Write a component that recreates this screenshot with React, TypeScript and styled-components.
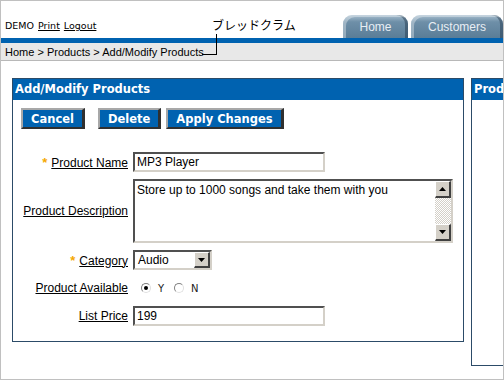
import styled, { createGlobalStyle } from "styled-components";

const GlobalStyle = createGlobalStyle`
  html, body {
    margin: 0;
    padding: 0;
    background: #ffffff;
  }
  body {
    font-family: "Liberation Sans", Arial, sans-serif;
    font-size: 12px;
    color: #000;
  }
`;

const Frame = styled.div`
  position: relative;
  width: 504px;
  height: 380px;
  box-sizing: border-box;
  border: 1px solid #c0c0c0;
  overflow: hidden;
  background: #fff;
`;

const TopBar = styled.div`
  display: flex;
  justify-content: space-between;
  align-items: flex-end;
  height: 37px;
  padding-left: 4px;
`;

const UserLinks = styled.div`
  font-family: "DejaVu Sans", Verdana, sans-serif;
  font-size: 9.5px;
  padding-bottom: 7px;
  display: flex;
  gap: 4px;

  a {
    color: #000;
    text-decoration: underline;
  }
`;

const Tabs = styled.div`
  display: flex;
  gap: 3px;
`;

const Tab = styled.div<{ $w: number }>`
  width: ${(p) => p.$w}px;
  height: 23px;
  box-sizing: border-box;
  border-radius: 9px 9px 0 0;
  background: linear-gradient(180deg, #a9bfcf 0%, #6e8fa8 30%, #5a7d97 100%);
  box-shadow: inset 3px 2px 0 rgba(255, 255, 255, 0.35),
    inset -3px 0 0 rgba(30, 50, 70, 0.45);
  color: #e8eef4;
  font-size: 12px;
  display: flex;
  align-items: center;
  justify-content: center;
  padding-top: 1px;
`;

const BlueBar = styled.div`
  height: 5px;
  background: #0062b0;
`;

const Breadcrumb = styled.div`
  height: 17px;
  background: #e8e8e8;
  border-bottom: 1px solid #b8b8b8;
  font-size: 11px;
  line-height: 18px;
  padding-left: 4px;
`;

const Content = styled.div`
  display: flex;
  gap: 7px;
  padding: 17px 0 0 11px;
  align-items: flex-start;
`;

const Panel = styled.div<{ $w: number; $h: number }>`
  flex-shrink: 0;
  width: ${(p) => p.$w}px;
  height: ${(p) => p.$h}px;
  box-sizing: border-box;
  border: 1px solid #2c4b68;
`;

const PanelHeader = styled.div`
  height: 21px;
  background: #0062b0;
  color: #fff;
  font-family: "DejaVu Sans", Verdana, sans-serif;
  font-weight: bold;
  font-size: 11.5px;
  line-height: 21px;
  padding-left: 2px;
  white-space: nowrap;
`;

const ButtonRow = styled.div`
  display: flex;
  padding: 8px 0 0 8px;
`;

const Button = styled.button<{ $gap?: number }>`
  height: 21px;
  margin-left: ${(p) => p.$gap ?? 0}px;
  padding: 0 8px;
  background: #0062b0;
  color: #fff;
  font-family: "DejaVu Sans", Verdana, sans-serif;
  font-weight: bold;
  font-size: 11.5px;
  border-style: solid;
  border-width: 2px 3px 2px 2px;
  border-color: #a8a8a8 #303030 #303030 #a8a8a8;
  cursor: pointer;
`;

const Form = styled.div`
  display: grid;
  grid-template-columns: 115px auto;
  column-gap: 5px;
  row-gap: 7px;
  padding-top: 23px;
  align-items: center;
`;

const Label = styled.div`
  text-align: right;
  white-space: nowrap;

  span {
    text-decoration: underline;
  }
`;

const Required = styled.b`
  color: #f5a800;
  font-size: 13px;
  margin-right: 4px;
`;

const Input = styled.div<{ $w: number }>`
  width: ${(p) => p.$w}px;
  height: 20px;
  box-sizing: border-box;
  border-style: solid;
  border-width: 2px;
  border-color: #505050 #d4d0c8 #d4d0c8 #505050;
  padding-left: 2px;
  line-height: 16px;
  background: #fff;
`;

const TextBox = styled.div`
  width: 320px;
  height: 64px;
  box-sizing: border-box;
  border-style: solid;
  border-width: 2px;
  border-color: #505050 #d4d0c8 #d4d0c8 #505050;
  display: flex;
`;

const TextBody = styled.div`
  flex: 1;
  padding: 2px 0 0 2px;
  line-height: 14px;
`;

const ScrollBar = styled.div`
  width: 16px;
  display: flex;
  flex-direction: column;
  background: repeating-conic-gradient(#d4d0c8 0% 25%, #ffffff 0% 50%) 0 0 / 2px 2px;
`;

const ScrollButton = styled.div`
  height: 17px;
  box-sizing: border-box;
  background: #d4d0c8;
  border-style: solid;
  border-width: 1px 2px 2px 1px;
  border-color: #ffffff #404040 #404040 #ffffff;
  display: flex;
  align-items: center;
  justify-content: center;
`;

const Track = styled.div`
  flex: 1;
`;

const Select = styled.div`
  width: 79px;
  height: 20px;
  box-sizing: border-box;
  border-style: solid;
  border-width: 2px;
  border-color: #505050 #d4d0c8 #d4d0c8 #505050;
  display: flex;
  background: #fff;
`;

const SelectText = styled.div`
  flex: 1;
  padding-left: 3px;
  line-height: 16px;
`;

const SelectButton = styled.div`
  width: 16px;
  box-sizing: border-box;
  background: #d4d0c8;
  border-style: solid;
  border-width: 1px 2px 2px 1px;
  border-color: #ffffff #404040 #404040 #ffffff;
  display: flex;
  align-items: center;
  justify-content: center;
`;

const Radios = styled.div`
  display: flex;
  align-items: center;
  height: 22px;
  padding-left: 8px;
  font-family: "DejaVu Sans", Tahoma, sans-serif;
  font-size: 10px;
  color: #222;
`;

const Radio = styled.span<{ $on?: boolean }>`
  width: 10px;
  height: 10px;
  box-sizing: border-box;
  border-radius: 50%;
  border: 1px solid;
  border-color: #808080 #e0e0e0 #e0e0e0 #808080;
  background: #fff;
  margin-right: 7px;
  display: inline-flex;
  align-items: center;
  justify-content: center;

  &::after {
    content: "";
    width: 4px;
    height: 4px;
    border-radius: 50%;
    background: ${(p) => (p.$on ? "#000" : "transparent")};
  }
`;

const RadioText = styled.span`
  margin-right: 10px;
`;

const Annotation = styled.div`
  position: absolute;
  left: 211px;
  top: 16px;
  font-family: "Noto Sans CJK JP", sans-serif;
  font-size: 12px;
  line-height: 16px;
`;

const Leader = styled.div`
  position: absolute;
  left: 201px;
  top: 33px;
  width: 14px;
  height: 20px;
  border-right: 1px solid #000;
  border-bottom: 1px solid #000;
`;

const Arrow = ({ up }: { up?: boolean }) => (
  <svg width="7" height="4" viewBox="0 0 7 4">
    <path d={up ? "M0 4 L3.5 0 L7 4 Z" : "M0 0 L7 0 L3.5 4 Z"} fill="#000" />
  </svg>
);

export default function App() {
  return (
    <Frame>
      <GlobalStyle />
      <TopBar>
        <UserLinks>
          <span>DEMO</span>
          <a>Print</a>
          <a>Logout</a>
        </UserLinks>
        <Tabs>
          <Tab $w={65}>Home</Tab>
          <Tab $w={92}>Customers</Tab>
        </Tabs>
      </TopBar>
      <BlueBar />
      <Breadcrumb>Home &gt; Products &gt; Add/Modify Products</Breadcrumb>
      <Content>
        <Panel $w={452} $h={264}>
          <PanelHeader>Add/Modify Products</PanelHeader>
          <ButtonRow>
            <Button>Cancel</Button>
            <Button $gap={13}>Delete</Button>
            <Button $gap={5}>Apply Changes</Button>
          </ButtonRow>
          <Form>
            <Label>
              <Required>*</Required>
              <span>Product Name</span>
            </Label>
            <Input $w={192}>MP3 Player</Input>

            <Label>
              <span>Product Description</span>
            </Label>
            <TextBox>
              <TextBody>Store up to 1000 songs and take them with you</TextBody>
              <ScrollBar>
                <ScrollButton>
                  <Arrow up />
                </ScrollButton>
                <Track />
                <ScrollButton>
                  <Arrow />
                </ScrollButton>
              </ScrollBar>
            </TextBox>

            <Label>
              <Required>*</Required>
              <span>Category</span>
            </Label>
            <Select>
              <SelectText>Audio</SelectText>
              <SelectButton>
                <Arrow />
              </SelectButton>
            </Select>

            <Label>
              <span>Product Available</span>
            </Label>
            <Radios>
              <Radio $on />
              <RadioText>Y</RadioText>
              <Radio />
              <RadioText>N</RadioText>
            </Radios>

            <Label>
              <span>List Price</span>
            </Label>
            <Input $w={192}>199</Input>
          </Form>
        </Panel>
        <Panel $w={200} $h={288}>
          <PanelHeader>Products</PanelHeader>
        </Panel>
      </Content>
      <Annotation>ブレッドクラム</Annotation>
      <Leader />
    </Frame>
  );
}
